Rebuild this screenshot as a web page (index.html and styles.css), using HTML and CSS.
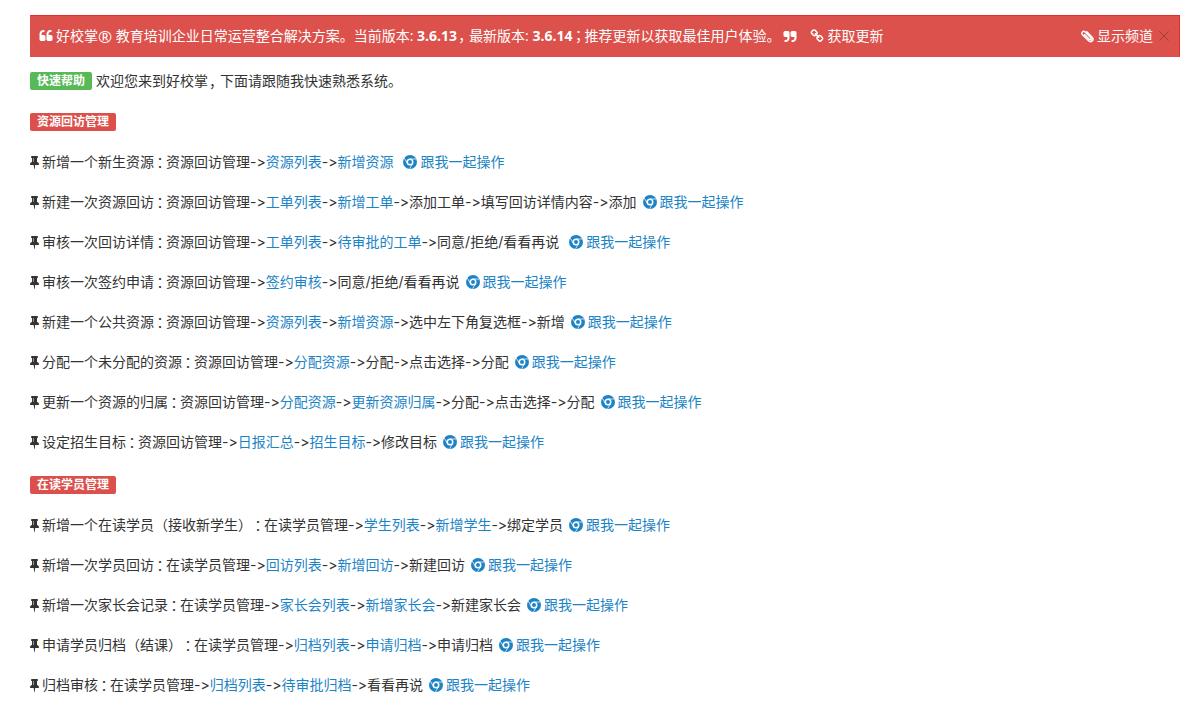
FILE: index.html
```html
<!DOCTYPE html>
<html lang="zh-CN">
<head>
<meta charset="utf-8">
<title>好校掌</title>
<link rel="stylesheet" href="styles.css">
</head>
<body>
<svg class="sprite" aria-hidden="true">
  <symbol id="quote" viewBox="0 0 1792 1792"><path d="M832 960v384q0 80-56 136t-136 56h-384q-80 0-136-56t-56-136v-704q0-104 40.5-198.5t109.5-163.5 163.5-109.5 198.5-40.5h64q26 0 45 19t19 45v128q0 26-19 45t-45 19h-64q-106 0-181 75t-75 181v32q0 40 28 68t68 28h224q80 0 136 56t56 136zm896 0v384q0 80-56 136t-136 56h-384q-80 0-136-56t-56-136v-704q0-104 40.5-198.5t109.5-163.5 163.5-109.5 198.5-40.5h64q26 0 45 19t19 45v128q0 26-19 45t-45 19h-64q-106 0-181 75t-75 181v32q0 40 28 68t68 28h224q80 0 136 56t56 136z"/></symbol>
  <symbol id="chain" viewBox="0 0 1792 1792"><path d="M1520 1216q0-40-28-68l-208-208q-28-28-68-28-42 0-72 32 3 3 19 18.500t21.500 21.500 15 19 13 25.500 3.500 27.500q0 40-28 68t-68 28q-15 0-27.500-3.500t-25.500-13-19-15-21.500-21.500-18.500-19q-33 31-33 73 0 40 28 68l206 207q27 27 68 27 40 0 68-26l147-146q28-28 28-67zm-703-705q0-40-28-68l-206-207q-28-28-68-28-39 0-68 27l-147 146q-28 28-28 67 0 40 28 68l208 208q27 27 68 27 42 0 72-31-3-3-19-18.500t-21.500-21.500-15-19-13-25.500-3.500-27.500q0-40 28-68t68-28q15 0 27.500 3.500t25.500 13 19 15 21.500 21.500 18.500 19q33-31 33-73zm895 705q0 120-85 203l-147 146q-83 83-203 83-121 0-204-85l-206-207q-83-83-83-203 0-123 88-209l-88-88q-86 88-208 88-120 0-204-84l-208-208q-84-84-84-204t85-203l147-146q83-83 203-83 121 0 204 85l206 207q83 83 83 203 0 123-88 209l88 88q86-88 208-88 120 0 204 84l208 208q84 84 84 204z"/></symbol>
  <symbol id="clip" viewBox="0 0 14 14"><path d="M4.500 5.500l4.700 4.800c1.300 1.200 2.800-.4 1.600-1.600L5.200 3C3.300 1.200.6 3.800 2.500 5.800l6 6c2.600 2.400 6-1 3.600-3.600L6.800 2.800" fill="none" stroke="currentColor" stroke-width="1.500" stroke-linecap="round"/></symbol>
  <symbol id="pin" viewBox="320 0 1152 1792"><path d="M800 864v-448q0-14-9-23t-23-9-23 9-9 23v448q0 14 9 23t23 9 23-9 9-23zm672 352q0 26-19 45t-45 19h-429l-51 483q-2 12-10.500 20.500t-20.500 8.500h-1q-27 0-32-27l-76-485h-404q-26 0-45-19t-19-45q0-123 78.500-221.500t177.500-98.500v-512q-52 0-90-38t-38-90 38-90 90-38h640q52 0 90 38t38 90-38 90-90 38v512q99 0 177.500 98.500t78.500 221.500z"/></symbol>
  <symbol id="chrome" viewBox="0 0 28 28"><circle cx="14" cy="14" r="14"/><circle cx="14" cy="14" r="5.500" fill="none" stroke="#fff" stroke-width="3"/><path d="M14 8h12.500M8.800 17L2.600 6.300M19.200 17L13 27.700" fill="none" stroke="#fff" stroke-width="1.500"/></symbol>
</svg>

<main class="page">
  <div class="alert" role="alert">
    <p class="alert-text">
      <svg class="icon"><use href="#quote"/></svg>
      <span>好校掌<span class="reg">®</span> 教育培训企业日常运营整合解决方案。当前版本: <strong>3.6.13</strong><i class="comma">，</i>最新版本: <strong>3.6.14</strong><i>；</i>推荐更新以获取最佳用户体验。</span>
      <svg class="icon flip"><use href="#quote"/></svg>
      <a class="update" href="#"><svg class="icon"><use href="#chain"/></svg>获取更新</a>
    </p>
    <div class="alert-tools">
      <a href="#"><svg class="icon"><use href="#clip"/></svg>显示频道</a>
      <button class="close" type="button" aria-label="关闭"><svg viewBox="0 0 10 10"><path d="M.5.5l9 9M9.500.5l-9 9"/></svg></button>
    </div>
  </div>

  <p class="intro"><span class="label green">快速帮助</span>欢迎您来到好校掌<i class="comma">，</i>下面请跟随我快速熟悉系统。</p>

  <section class="group">
    <h2 class="label red">资源回访管理</h2>
    <ul class="steps">
      <li><svg class="pin"><use href="#pin"/></svg>新增一个新生资源<i>：</i>资源回访管理-&gt;<a href="#">资源列表</a>-&gt;<a href="#">新增资源</a><a class="follow wide" href="#"><svg class="chrome"><use href="#chrome"/></svg>跟我一起操作</a></li>
      <li><svg class="pin"><use href="#pin"/></svg>新建一次资源回访<i>：</i>资源回访管理-&gt;<a href="#">工单列表</a>-&gt;<a href="#">新增工单</a>-&gt;添加工单-&gt;填写回访详情内容-&gt;添加<a class="follow" href="#"><svg class="chrome"><use href="#chrome"/></svg>跟我一起操作</a></li>
      <li><svg class="pin"><use href="#pin"/></svg>审核一次回访详情<i>：</i>资源回访管理-&gt;<a href="#">工单列表</a>-&gt;<a href="#">待审批的工单</a>-&gt;同意/拒绝/看看再说<a class="follow wide" href="#"><svg class="chrome"><use href="#chrome"/></svg>跟我一起操作</a></li>
      <li><svg class="pin"><use href="#pin"/></svg>审核一次签约申请<i>：</i>资源回访管理-&gt;<a href="#">签约审核</a>-&gt;同意/拒绝/看看再说<a class="follow" href="#"><svg class="chrome"><use href="#chrome"/></svg>跟我一起操作</a></li>
      <li><svg class="pin"><use href="#pin"/></svg>新建一个公共资源<i>：</i>资源回访管理-&gt;<a href="#">资源列表</a>-&gt;<a href="#">新增资源</a>-&gt;选中左下角复选框-&gt;新增<a class="follow" href="#"><svg class="chrome"><use href="#chrome"/></svg>跟我一起操作</a></li>
      <li><svg class="pin"><use href="#pin"/></svg>分配一个未分配的资源<i>：</i>资源回访管理-&gt;<a href="#">分配资源</a>-&gt;分配-&gt;点击选择-&gt;分配<a class="follow" href="#"><svg class="chrome"><use href="#chrome"/></svg>跟我一起操作</a></li>
      <li><svg class="pin"><use href="#pin"/></svg>更新一个资源的归属<i>：</i>资源回访管理-&gt;<a href="#">分配资源</a>-&gt;<a href="#">更新资源归属</a>-&gt;分配-&gt;点击选择-&gt;分配<a class="follow" href="#"><svg class="chrome"><use href="#chrome"/></svg>跟我一起操作</a></li>
      <li><svg class="pin"><use href="#pin"/></svg>设定招生目标<i>：</i>资源回访管理-&gt;<a href="#">日报汇总</a>-&gt;<a href="#">招生目标</a>-&gt;修改目标<a class="follow" href="#"><svg class="chrome"><use href="#chrome"/></svg>跟我一起操作</a></li>
    </ul>
  </section>

  <section class="group">
    <h2 class="label red">在读学员管理</h2>
    <ul class="steps">
      <li><svg class="pin"><use href="#pin"/></svg>新增一个在读学员（接收新学生）<i>：</i>在读学员管理-&gt;<a href="#">学生列表</a>-&gt;<a href="#">新增学生</a>-&gt;绑定学员<a class="follow" href="#"><svg class="chrome"><use href="#chrome"/></svg>跟我一起操作</a></li>
      <li><svg class="pin"><use href="#pin"/></svg>新增一次学员回访<i>：</i>在读学员管理-&gt;<a href="#">回访列表</a>-&gt;<a href="#">新增回访</a>-&gt;新建回访<a class="follow" href="#"><svg class="chrome"><use href="#chrome"/></svg>跟我一起操作</a></li>
      <li><svg class="pin"><use href="#pin"/></svg>新增一次家长会记录<i>：</i>在读学员管理-&gt;<a href="#">家长会列表</a>-&gt;<a href="#">新增家长会</a>-&gt;新建家长会<a class="follow" href="#"><svg class="chrome"><use href="#chrome"/></svg>跟我一起操作</a></li>
      <li><svg class="pin"><use href="#pin"/></svg>申请学员归档（结课）<i>：</i>在读学员管理-&gt;<a href="#">归档列表</a>-&gt;<a href="#">申请归档</a>-&gt;申请归档<a class="follow" href="#"><svg class="chrome"><use href="#chrome"/></svg>跟我一起操作</a></li>
      <li><svg class="pin"><use href="#pin"/></svg>归档审核<i>：</i>在读学员管理-&gt;<a href="#">归档列表</a>-&gt;<a href="#">待审批归档</a>-&gt;看看再说<a class="follow" href="#"><svg class="chrome"><use href="#chrome"/></svg>跟我一起操作</a></li>
    </ul>
  </section>
</main>
</body>
</html>
```
FILE: styles.css
```css
* { box-sizing: border-box; }
body {
  margin: 0;
  background: #fff;
  color: #333;
  font: 14px/20px "Open Sans", "Noto Sans CJK SC", sans-serif;
}
a { color: #1c84c6; text-decoration: none; }
p, h2, ul { margin: 0; padding: 0; }
/* full-width punctuation set in a slightly tighter cell */
i {
  display: inline-block;
  width: 12px;
  font-family: "Noto Sans CJK TC", sans-serif;
  font-style: normal;
  line-height: 18px;
  text-indent: -1px;
}
.comma { font-family: "Noto Sans CJK SC", sans-serif; text-indent: 1px; }
svg { fill: currentColor; flex: none; }
.sprite { display: none; }
.page { padding: 15px 20px 0 30px; }

.alert {
  display: flex;
  justify-content: space-between;
  align-items: center;
  padding: 10px 10px 10px 8px;
  border: 1px solid #d9302c;
  border-bottom-color: #dc514c;
  border-left-color: #dc514c;
  background: #dc514c;
  color: #fff;
}
.alert a { display: flex; align-items: center; gap: 3px; color: #fff; }
.alert-text { display: flex; align-items: center; gap: 3px; white-space: nowrap; }
.alert-text .update { margin-left: 10px; }
.reg { font-size: 17px; line-height: 18px; vertical-align: bottom; }
.icon { width: 14px; height: 14px; }
.flip { transform: rotate(180deg); }
.alert-tools { display: flex; align-items: center; gap: 6px; white-space: nowrap; }
.close { display: flex; padding: 0; border: 0; background: none; color: #a03c38; }
.close svg { width: 10px; height: 10px; stroke: currentColor; }

.intro { margin-top: 14px; display: flex; align-items: center; }
.label {
  display: inline-block;
  padding: 0 7px;
  border-radius: 2px;
  color: #fff;
  font-size: 12px;
  line-height: 18px;
  font-weight: 700;
}
.green { background: #58b957; margin-right: 4px; }
.red { background: #dc4f4b; }

.group { display: flex; flex-direction: column; align-items: flex-start; gap: 21px; margin-top: 22px; }
.group + .group { margin-top: 24px; }
.steps {
  display: flex;
  flex-direction: column;
  gap: 20px;
  list-style: none;
  font-family: Inter, "Noto Sans CJK SC", sans-serif;
  font-variant-ligatures: no-contextual;
}
.steps li { display: flex; align-items: center; white-space: nowrap; }
.pin { width: 9px; height: 14px; margin-right: 3px; }
.follow { display: flex; align-items: center; gap: 3px; margin-left: 6px; }
.wide { margin-left: 10px; }
.chrome { width: 14px; height: 14px; }
```
